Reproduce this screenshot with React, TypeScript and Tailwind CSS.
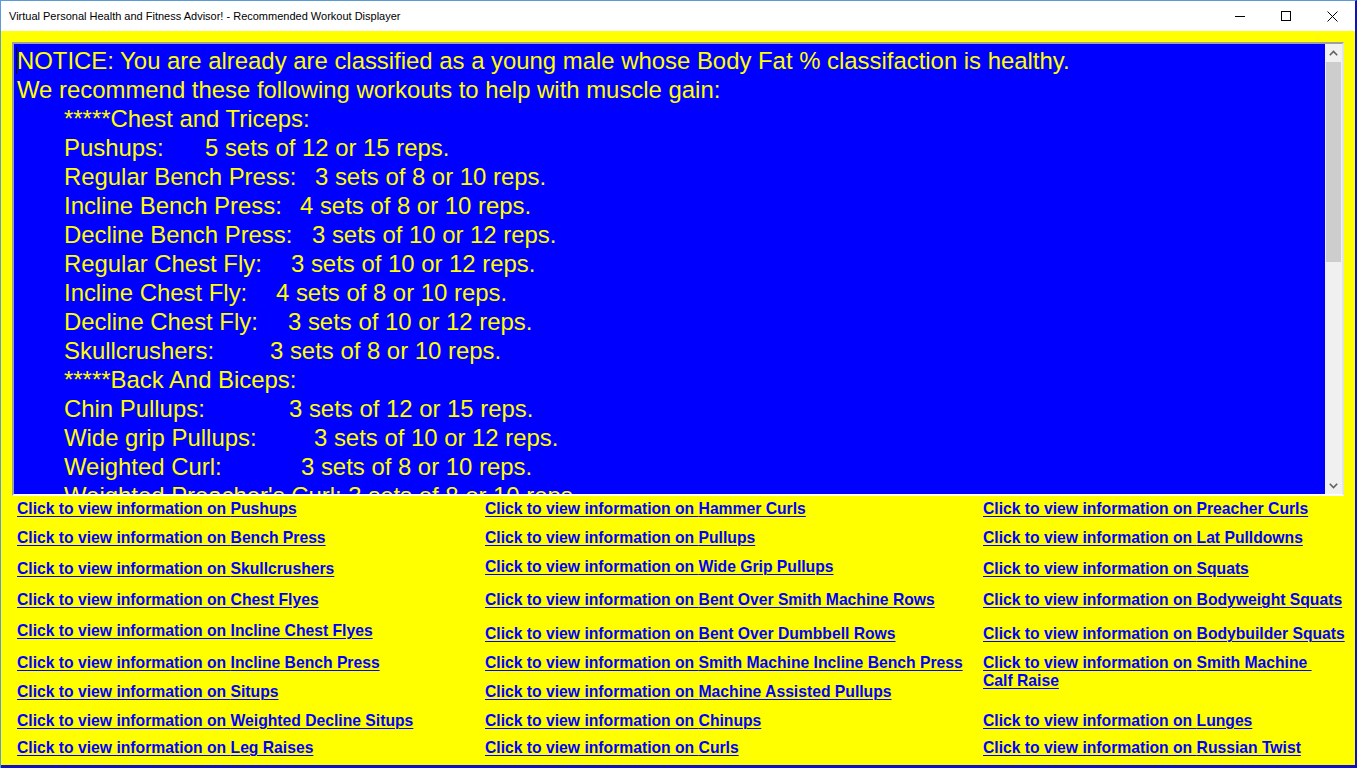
import React from 'react';

type Line = { text?: string; a?: string; w?: number; b?: string; indent?: boolean };

const lines: Line[] = [
  { text: 'NOTICE: You are already are classified as a young male whose Body Fat % classifaction is healthy.' },
  { text: 'We recommend these following workouts to help with muscle gain:' },
  { indent: true, text: '*****Chest and Triceps:' },
  { indent: true, a: 'Pushups:', w: 141, b: '5 sets of 12 or 15 reps.' },
  { indent: true, a: 'Regular Bench Press:', w: 251, b: '3 sets of 8 or 10 reps.' },
  { indent: true, a: 'Incline Bench Press:', w: 236, b: '4 sets of 8 or 10 reps.' },
  { indent: true, a: 'Decline Bench Press:', w: 248, b: '3 sets of 10 or 12 reps.' },
  { indent: true, a: 'Regular Chest Fly:', w: 227, b: '3 sets of 10 or 12 reps.' },
  { indent: true, a: 'Incline Chest Fly:', w: 212, b: '4 sets of 8 or 10 reps.' },
  { indent: true, a: 'Decline Chest Fly:', w: 224, b: '3 sets of 10 or 12 reps.' },
  { indent: true, a: 'Skullcrushers:', w: 206, b: '3 sets of 8 or 10 reps.' },
  { indent: true, text: '*****Back And Biceps:' },
  { indent: true, a: 'Chin Pullups:', w: 225, b: '3 sets of 12 or 15 reps.' },
  { indent: true, a: 'Wide grip Pullups:', w: 250, b: '3 sets of 10 or 12 reps.' },
  { indent: true, a: 'Weighted Curl:', w: 237, b: '3 sets of 8 or 10 reps.' },
  { indent: true, text: "Weighted Preacher's Curl: 3 sets of 8 or 10 reps." },
];

type Link = { label: string; mt: number; second?: string };

// margin-top of each link (in px), tuned to the form's hand-placed labels
const col1: Link[] = [
  { label: 'Pushups', mt: 0 },
  { label: 'Bench Press', mt: 12 },
  { label: 'Skullcrushers', mt: 14 },
  { label: 'Chest Flyes', mt: 14 },
  { label: 'Incline Chest Flyes', mt: 14 },
  { label: 'Incline Bench Press', mt: 15 },
  { label: 'Situps', mt: 12 },
  { label: 'Weighted Decline Situps', mt: 12 },
  { label: 'Leg Raises', mt: 10 },
];

const col2: Link[] = [
  { label: 'Hammer Curls', mt: 0 },
  { label: 'Pullups', mt: 12 },
  { label: 'Wide Grip Pullups', mt: 12 },
  { label: 'Bent Over Smith Machine Rows', mt: 16 },
  { label: 'Bent Over Dumbbell Rows', mt: 17 },
  { label: 'Smith Machine Incline Bench Press', mt: 12 },
  { label: 'Machine Assisted Pullups', mt: 12 },
  { label: 'Chinups', mt: 12 },
  { label: 'Curls', mt: 10 },
];

const col3: Link[] = [
  { label: 'Preacher Curls', mt: 0 },
  { label: 'Lat Pulldowns', mt: 12 },
  { label: 'Squats', mt: 14 },
  { label: 'Bodyweight Squats', mt: 14 },
  { label: 'Bodybuilder Squats', mt: 17 },
  { label: 'Smith Machine\u00a0', second: 'Calf Raise', mt: 12 },
  { label: 'Lunges', mt: 22 },
  { label: 'Russian Twist', mt: 10 },
];

const LinkColumn: React.FC<{ items: Link[] }> = ({ items }) => (
  <div className="flex flex-col items-start">
    {items.map((l) => (
      <a
        key={l.label}
        href="#"
        style={{ marginTop: l.mt }}
        className={`block whitespace-nowrap text-[15.7px] font-bold text-[#0000ff] underline underline-offset-[2px] decoration-[1px] ${
          l.second ? 'leading-[18px]' : 'leading-[17px]'
        }`}
      >
        <span>Click to view information on {l.label}</span>
        {l.second && (
          <>
            <br />
            <span>{l.second}</span>
          </>
        )}
      </a>
    ))}
  </div>
);

export default function App() {
  return (
    <div
      className="w-[1357px] h-[768px] flex flex-col overflow-hidden bg-white border-t border-l border-r-2 border-[#5a9bd8] border-r-[#1010c8]"
      style={{ fontFamily: '"Liberation Sans", Arial, sans-serif' }}
    >
      {/* title bar */}
      <div className="h-[30px] flex items-center justify-between bg-white shrink-0">
        <div className="pl-[8px] text-[11px] text-[#000000]">
          Virtual Personal Health and Fitness Advisor! - Recommended Workout Displayer
        </div>
        <div className="flex h-full">
          <div className="w-[46px] h-full flex items-center justify-center">
            <svg width="10" height="10" viewBox="0 0 10 10">
              <path d="M0 5.5h10" stroke="#000" strokeWidth="1" />
            </svg>
          </div>
          <div className="w-[46px] h-full flex items-center justify-center">
            <svg width="10" height="10" viewBox="0 0 10 10">
              <rect x="0.5" y="0.5" width="9" height="9" fill="none" stroke="#000" strokeWidth="1" />
            </svg>
          </div>
          <div className="w-[46px] h-full flex items-center justify-center">
            <svg width="11" height="11" viewBox="0 0 11 11">
              <path d="M0.5 0.5l10 10M10.5 0.5l-10 10" stroke="#000" strokeWidth="1" />
            </svg>
          </div>
        </div>
      </div>

      {/* client area */}
      <div className="flex-1 bg-[#ffff00] flex flex-col pt-[11px] pl-[11px] pr-[10px] border-b-[3px] border-[#1010c8] min-h-0">
        {/* text box */}
        <div className="h-[454px] w-[1332px] flex border-t-2 border-l-2 border-t-[#a0a0a0] border-l-[#a0a0a0] border-b-2 border-r-2 border-b-white border-r-[#e3e3e3] shrink-0">
          <div className="flex-1 bg-[#0000ff] overflow-hidden pl-[3px] pt-[2px]">
            {lines.map((l, i) => (
              <div
                key={i}
                className={`flex whitespace-pre text-[23.9px] leading-[29px] text-[#ffff00] ${l.indent ? 'pl-[47px]' : ''}`}
              >
                {i === 0 && <span className="w-px h-[27px] mt-px bg-black -ml-[1px] mr-0" />}
                {l.text !== undefined ? (
                  <span>{l.text}</span>
                ) : (
                  <>
                    <span className="inline-block" style={{ width: l.w }}>
                      {l.a}
                    </span>
                    <span>{l.b}</span>
                  </>
                )}
              </div>
            ))}
          </div>
          {/* scrollbar */}
          <div className="w-[17px] bg-[#f0f0f0] flex flex-col">
            <div className="h-[17px] flex items-center justify-center">
              <svg width="9" height="6" viewBox="0 0 9 6">
                <path d="M0.8 5.2L4.5 1.5l3.7 3.7" fill="none" stroke="#606060" strokeWidth="1.6" />
              </svg>
            </div>
            <div className="mx-px mt-px h-[200px] bg-[#cdcdcd]" />
            <div className="flex-1" />
            <div className="h-[17px] flex items-center justify-center">
              <svg width="9" height="6" viewBox="0 0 9 6">
                <path d="M0.8 0.8L4.5 4.5l3.7-3.7" fill="none" stroke="#606060" strokeWidth="1.6" />
              </svg>
            </div>
          </div>
        </div>

        {/* links */}
        <div className="flex pl-[5px] pt-[4px]">
          <div className="w-[468px] shrink-0">
            <LinkColumn items={col1} />
          </div>
          <div className="w-[498px] shrink-0">
            <LinkColumn items={col2} />
          </div>
          <div className="w-[370px] shrink-0">
            <LinkColumn items={col3} />
          </div>
        </div>
      </div>
    </div>
  );
}
